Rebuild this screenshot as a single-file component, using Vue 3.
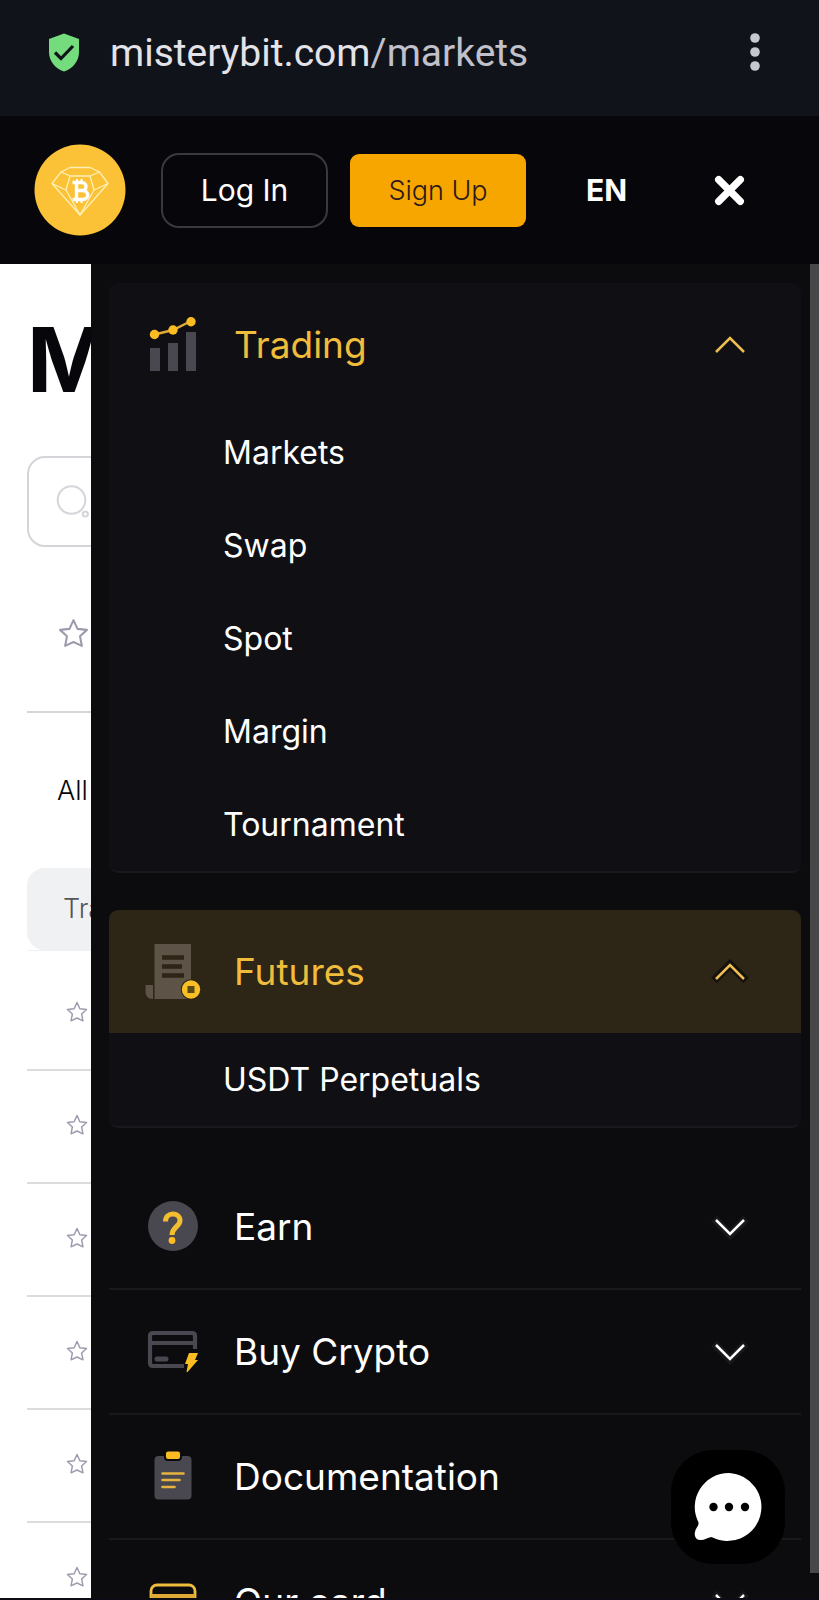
<script setup>
import { ref } from 'vue'

const sections = ref([
  { id: 'trading', label: 'Trading', open: true, items: ['Markets', 'Swap', 'Spot', 'Margin', 'Tournament'] },
  { id: 'futures', label: 'Futures', open: true, highlighted: true, items: ['USDT Perpetuals'] },
  { id: 'earn', label: 'Earn', open: false, items: [] },
  { id: 'buy', label: 'Buy Crypto', open: false, items: [] },
  { id: 'docs', label: 'Documentation', open: false, link: true, items: [] },
  { id: 'card', label: 'Our card', open: false, items: [] },
])

const starPath = 'M15 2l3.900 8.500 9.100 1-6.700 6.200 1.800 9.300-8.100-3.800L6.900 27l1.800-9.300L2 11.500l9.100-1z'
</script>

<template>
  <div class="screen">
    <div class="browser-bar">
      <svg class="shield" viewBox="0 0 32 39" aria-hidden="true">
        <path d="M16 0.500L31 6v13c0 9-6 16.500-15 19.500C7 35.500 1 28 1 19V6z" fill="#74dc7c" />
        <path d="M7 19.500l6 6L25 13" fill="none" stroke="#10131a" stroke-width="3.200" />
      </svg>
      <div class="url">misterybit.com<span class="path">/markets</span></div>
      <button class="menu-button" aria-label="Menu">
        <svg viewBox="0 0 10 38" aria-hidden="true">
          <g fill="#c6c7d0"><circle cx="5" cy="5" r="4.800" /><circle cx="5" cy="19" r="4.800" /><circle cx="5" cy="33" r="4.800" /></g>
        </svg>
      </button>
    </div>

    <header class="site-header">
      <a class="logo" href="#" aria-label="Home">
        <svg viewBox="0 0 92 92" aria-hidden="true">
          <circle cx="46" cy="46" r="45.500" fill="#fcc237" />
          <g fill="none" stroke="#fff0b5" stroke-width="1.300" stroke-linejoin="round">
            <path d="M36 23.500H56L65.500 28 74 39.500 46 71 18 39.500 27 28z" />
            <path d="M27 28l9 4h20l9.500-4M36 32l-4 14L18 39.500M32 46l14 25 14-25-4-14M60 46l14-6.500" />
          </g>
          <g fill="none" stroke="#fff" stroke-width="3.400">
            <path d="M38.500 38.500h9c6 0 6 8 0 8h-5 6c7 0 7 9 0 9h-10M42.500 38v18" />
            <path d="M43 35v4M47.500 35v4M43 55v4M47.500 55v4" stroke-width="2" />
          </g>
        </svg>
      </a>
      <button class="login">Log In</button>
      <button class="signup">Sign Up</button>
      <button class="language">EN</button>
      <button class="close" aria-label="Close menu">
        <svg viewBox="0 0 30 30" aria-hidden="true"><path d="M4.500 4.500l21 21M25.500 4.500l-21 21" stroke="#fff" stroke-width="7" stroke-linecap="round" /></svg>
      </button>
    </header>

    <div class="stage">
      <main class="page">
        <h1>M</h1>
        <div class="search">
          <svg viewBox="0 0 34 34" aria-hidden="true"><g fill="none" stroke="#d4d5d9" stroke-width="2"><circle cx="15.500" cy="15" r="13.800" /><circle cx="29.300" cy="29" r="2.600" /></g></svg>
        </div>
        <div class="favourites">
          <svg viewBox="0 0 30 30" aria-hidden="true"><path :d="starPath" fill="none" stroke="#9c9bad" stroke-width="2" stroke-linejoin="round" /></svg>
        </div>
        <div class="filter">All</div>
        <div class="table-head">Tra</div>
        <div class="rows">
          <div v-for="n in 6" :key="n" class="row">
            <svg viewBox="0 0 30 30" aria-hidden="true"><path :d="starPath" fill="none" stroke="#9c9bad" stroke-width="2" stroke-linejoin="round" /></svg>
          </div>
        </div>
      </main>

      <nav class="drawer">
        <section
          v-for="s in sections"
          :key="s.id"
          class="section"
          :class="{ open: s.open, highlighted: s.highlighted }"
        >
          <button class="section-head" :aria-expanded="s.open" @click="s.open = !s.open">
            <svg v-if="s.id === 'trading'" class="icon" viewBox="0 0 56 56" aria-hidden="true">
              <path d="M5 31h10v23H5zM23 26h10v28H23zM41 15h10v39H41z" fill="#494850" />
              <path d="M9.500 17.500L28 13l18-9" fill="none" stroke="#e0a935" stroke-width="2.400" />
              <g fill="#fdbd22"><circle cx="9.500" cy="17.500" r="4.700" /><circle cx="28" cy="13" r="4.700" /><circle cx="46" cy="4.700" r="4.700" /></g>
            </svg>
            <svg v-else-if="s.id === 'futures'" class="icon" viewBox="0 0 56 56" aria-hidden="true">
              <path d="M9.500 0H46v55H9.500zM0.500 41h7.500v14C3 55 0.500 52 0.500 47z" fill="#5d5347" />
              <path d="M17 13.500h22M17 22.500h20M17 31.500h22" stroke="#2d2515" stroke-width="4.400" />
              <circle cx="46" cy="45.500" r="10.200" fill="#2d2515" />
              <circle cx="46" cy="45.500" r="9.200" fill="#f9c026" />
              <path d="M42.500 42h7v7h-7z" fill="#5b4918" />
            </svg>
            <svg v-else-if="s.id === 'earn'" class="icon" viewBox="0 0 56 56" aria-hidden="true">
              <circle cx="28" cy="27" r="25" fill="#494850" />
              <path d="M20.500 22.500c0-10.500 14.500-9.500 14.500-1 0 6-8 6.500-8 14.500" fill="none" stroke="#f3bd30" stroke-width="5" />
              <circle cx="27" cy="41.500" r="3.400" fill="#fdbd22" />
            </svg>
            <svg v-else-if="s.id === 'buy'" class="icon" viewBox="0 0 56 56" aria-hidden="true">
              <path d="M50 25V12q0-3-3-3H8q-3 0-3 3v27q0 3 3 3h31M5 19h45" fill="none" stroke="#494850" stroke-width="4.200" />
              <path d="M12 35h9" stroke="#494850" stroke-width="5" stroke-linecap="round" />
              <path d="M44 29h9l-3 7h3L42.500 48h-1l1.500-8h-3z" fill="#fdbd22" />
            </svg>
            <svg v-else-if="s.id === 'docs'" class="icon" viewBox="0 0 56 56" aria-hidden="true">
              <rect x="9.500" y="7" width="37" height="43.500" rx="4" fill="#494850" />
              <rect x="20" y="1.500" width="16" height="9.500" rx="3" fill="#fdbd22" stroke="#0c0c0e" stroke-width="2" />
              <path d="M17.500 24.500h21M17.500 31h17M17.500 38h12" stroke="#e5b33e" stroke-width="2.600" stroke-linecap="round" />
            </svg>
            <svg v-else class="icon" viewBox="0 0 56 56" aria-hidden="true">
              <rect x="6" y="11" width="44" height="36" rx="6" fill="none" stroke="#edbd3c" stroke-width="2.800" />
              <path d="M6 20h44v6H6z" fill="#e0a935" />
            </svg>
            <span class="label">{{ s.label }}</span>
            <svg v-if="!s.link" class="chevron" viewBox="0 0 38 26" aria-hidden="true">
              <path class="halo" d="M3 21.500L19 5.500l16 16" />
              <path class="line" d="M5 20L19 6l14 14" />
            </svg>
          </button>
          <ul v-if="s.open" class="submenu">
            <li v-for="item in s.items" :key="item"><a href="#">{{ item }}</a></li>
          </ul>
        </section>
      </nav>
      <div class="scrollbar"></div>

      <button class="chat" aria-label="Open chat">
        <svg viewBox="0 0 70 70" aria-hidden="true">
          <path d="M35 1a34 34 0 1 1-17.500 64C13 66 10 68.500 6 68 2 68 0 64 1 60c.5-4 4-6 3.500-9.500A34 34 0 0 1 35 1z" fill="#fff" />
          <g fill="#000"><circle cx="19.500" cy="35" r="4.200" /><circle cx="35" cy="35" r="4.200" /><circle cx="51" cy="35" r="4.200" /></g>
        </svg>
      </button>
    </div>
    <div class="system-edge"></div>
  </div>
</template>

<style>
body {
  margin: 0;
}
</style>

<style scoped>
.screen {
  display: flex;
  flex-direction: column;
  height: 100vh;
  overflow: hidden;
  background: #0c0c0e;
  font-family: Inter, "Liberation Sans", sans-serif;
}
.screen * {
  box-sizing: border-box;
}
svg {
  display: block;
  flex: none;
}
button {
  padding: 0;
  border: 0;
  background: none;
  font-family: inherit;
}
a {
  color: inherit;
  text-decoration: none;
}
.browser-bar {
  display: flex;
  flex: none;
  align-items: center;
  height: 116px;
  padding: 0 59px 12px 48px;
  background: #10131a;
}
.shield {
  width: 32px;
  height: 39px;
}
.url {
  flex: 1;
  margin-left: 30px;
  padding-top: 2px;
  color: #e3e3e9;
  font-family: Roboto, sans-serif;
  font-size: 39px;
  line-height: 48px;
}
.path {
  color: #c0c1ca;
}
.menu-button svg {
  width: 10px;
  height: 38px;
}
.site-header {
  display: flex;
  flex: none;
  align-items: center;
  height: 148px;
  padding: 0 74px 0 34px;
  background: #07070b;
}
.logo svg {
  width: 92px;
  height: 92px;
}
.login {
  width: 167px;
  height: 75px;
  margin-left: 35px;
  border: 2px solid #39393e;
  border-radius: 18px;
  color: #fff;
  font-size: 30px;
}
.signup {
  width: 176px;
  height: 73px;
  margin-left: 22px;
  border-radius: 9px;
  background: #f7a600;
  color: #2b1a18;
  font-size: 27px;
  font-weight: 300;
}
.language {
  margin-left: 60px;
  color: #fff;
  font-size: 30px;
  font-weight: 700;
}
.close {
  margin-left: auto;
}
.close svg {
  width: 31px;
  height: 31px;
}
.stage {
  position: relative;
  display: flex;
  flex: 1;
  min-height: 0;
  overflow: hidden;
}
.page {
  flex: none;
  width: 91px;
  padding-left: 27px;
  overflow: hidden;
  background: #fff;
  color: #07070b;
  white-space: nowrap;
}
h1 {
  margin: 40px 0;
  font-size: 90px;
  font-weight: 700;
  line-height: 112px;
}
.search {
  display: flex;
  align-items: center;
  width: 200px;
  height: 91px;
  padding-left: 27px;
  border: 2px solid #d4d5d9;
  border-radius: 18px;
}
.search svg {
  width: 34px;
  height: 34px;
}
.favourites {
  display: flex;
  align-items: center;
  height: 166px;
  padding: 8px 0 0 31px;
  border-bottom: 2px solid #d6d6d6;
}
.favourites svg {
  width: 31px;
  height: 31px;
}
.filter {
  padding-left: 30px;
  font-size: 27px;
  font-weight: 300;
  line-height: 155px;
}
.table-head {
  width: 200px;
  padding-left: 36px;
  border-radius: 18px;
  background: #f0f1f3;
  color: #55565a;
  font-size: 27px;
  font-weight: 300;
  line-height: 82px;
}
.rows {
  padding-top: 7px;
  border-top: 1px solid #f0f1f3;
}
.row {
  display: flex;
  align-items: center;
  height: 113px;
  padding: 0 0 3px 39px;
  border-bottom: 2px solid #dcdcdc;
}
.row svg {
  width: 22px;
  height: 22px;
}
.drawer {
  flex: 1;
  min-width: 0;
  padding: 19px 9px 0 18px;
  overflow: hidden;
}
.section {
  border-bottom: 2px solid #19191c;
  color: #fff;
}
.section.open {
  margin-bottom: 37px;
  overflow: hidden;
  border-radius: 9px;
  background: #101014;
}
.section-head {
  display: flex;
  align-items: center;
  width: 100%;
  height: 123px;
  padding: 0 52px 0 36px;
  color: inherit;
  font-size: 37px;
  text-align: left;
  cursor: pointer;
}
.open .section-head {
  color: #f0bc3b;
}
.highlighted .section-head {
  background: #2d2515;
}
.icon {
  width: 56px;
  height: 56px;
}
.label {
  flex: 1;
  margin-left: 33px;
}
.chevron {
  width: 38px;
  height: 26px;
  fill: none;
  transform: rotate(180deg);
}
.open .chevron {
  transform: none;
}
.halo {
  stroke: #18181b;
  stroke-width: 8;
}
.open .halo {
  stroke: #101014;
}
.highlighted .halo {
  stroke: #15120d;
}
.line {
  stroke: #fff;
  stroke-width: 2.5;
}
.open .line {
  stroke: #edbd52;
}
.submenu {
  margin: 0;
  padding: 0;
  list-style: none;
}
.submenu a {
  display: block;
  padding-left: 114px;
  font-size: 32px;
  line-height: 93px;
}
.scrollbar {
  flex: none;
  width: 9px;
  margin-bottom: 25px;
  background: #474747;
}
.chat {
  position: absolute;
  right: 34px;
  bottom: 34px;
  display: flex;
  align-items: center;
  justify-content: center;
  width: 114px;
  height: 114px;
  padding-left: 2px;
  border-radius: 42px;
  background: #000;
}
.chat svg {
  width: 70px;
  height: 70px;
}
.system-edge {
  flex: none;
  height: 2px;
  background: #0d0c14;
}
</style>
